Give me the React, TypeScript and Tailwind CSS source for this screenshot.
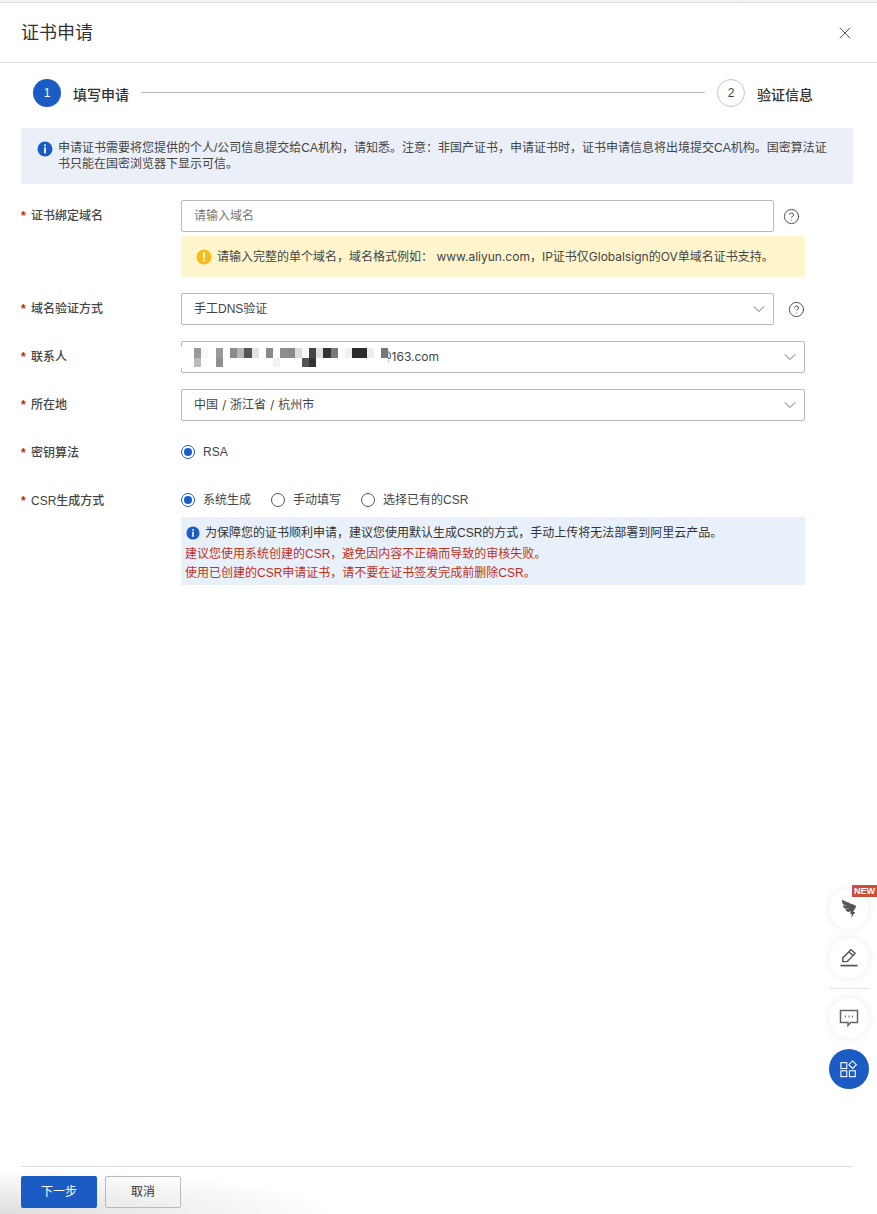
import { ChevronDown, CircleHelp, X } from "lucide-react";
import { AiOutlineDingding } from "react-icons/ai";

// redacted email mosaic, 7px cols starting at x=194
const mosaicTop = [
  "bg-[#999]", "bg-[#f8f8f8]", "", "bg-[#999]", "", "bg-[#8a8a8a]", "bg-[#b5b5b5]", "bg-[#555]", "bg-[#e2e2e2]", "",
  "bg-[#8a8a8a]", "", "bg-[#8f8f8f]", "bg-[#8a8a8a]", "bg-[#ddd]", "bg-[#f8f8f8]", "bg-[#444]", "bg-[#e0e0e0]", "bg-[#333]", "bg-[#777]",
  "bg-white", "bg-[#f0f0f0]", "bg-[#2b2b2b]", "bg-[#2b2b2b]", "bg-[#eee]", "bg-white", "bg-[#777]",
];
const mosaicBottom = [
  "bg-[#bbb]", "", "", "bg-[#8f8f8f]", "", "", "", "", "", "",
  "", "bg-[#f2f2f2]", "", "", "", "bg-[#555]", "bg-[#333]", "", "", "",
  "", "", "", "", "", "bg-white", "bg-white",
];

function InfoIcon({ className }: { className: string }) {
  return (
    <svg viewBox="0 0 16 16" className={className}>
      <circle cx="8" cy="8" r="7.5" fill="#1b5cc4" />
      <rect x="7.1" y="3.4" width="1.8" height="1.8" fill="#fff" />
      <rect x="7.1" y="6.4" width="1.8" height="6" fill="#fff" />
    </svg>
  );
}

function Label({ children }: { children: string }) {
  return (
    <div className="w-[160px] shrink-0 flex text-xs leading-[inherit] font-medium text-[#444]">
      <span className="w-[10px] text-[#c7260e] font-bold">*</span>
      {children}
    </div>
  );
}

function Radio({ label, checked }: { label: string; checked?: boolean }) {
  return (
    <div className="flex items-center gap-2 text-xs text-[#444]">
      <span className={`w-[14px] h-[14px] rounded-full border flex items-center justify-center ${checked ? "border-[#1b5cc4]" : "border-[#555]"}`}>
        {checked && <span className="w-2 h-2 rounded-full bg-[#1b5cc4]" />}
      </span>
      {label}
    </div>
  );
}

function Help() {
  return <CircleHelp size={17} strokeWidth={1.2} className="text-[#333]" />;
}

function Select({ children }: { children: React.ReactNode }) {
  return (
    <div className="flex-1 h-8 border border-[#b8bac2] rounded-[2px] px-3 flex items-center justify-between text-xs text-[#444]">
      <span>{children}</span>
      <ChevronDown size={20} strokeWidth={1} className="text-[#555] -mr-[8px]" />
    </div>
  );
}

export default function App() {
  return (
    <div className="relative h-screen overflow-hidden bg-white flex flex-col font-['Liberation_Sans','Noto_Sans_CJK_SC',sans-serif]">
      <div className="absolute left-0 bottom-0 w-[340px] h-[46px] bg-[radial-gradient(ellipse_at_bottom_left,#dedede,transparent_70%)]" />

      <div className="h-[3px] bg-[#f4f4f4] border-b border-[#dcdcdc] flex justify-end pr-[138px]">
        <div className="w-px bg-[#ddd]" />
      </div>

      <header className="h-[60px] shrink-0 border-b border-[#e3e3e3] pl-[21px] pr-[22px] flex items-center justify-between">
        <h1 className="text-lg text-[#333]">证书申请</h1>
        <X size={20} strokeWidth={1} className="text-[#333]" />
      </header>

      <main className="flex-1 pl-[21px] pr-6 pt-4">
        <div className="flex items-start pl-3 pr-10">
          <span className="w-7 h-7 rounded-full bg-[#1b5cc4] text-white text-xs flex items-center justify-center">1</span>
          <span className="ml-3 mt-[7px] text-sm leading-[18px] font-medium text-[#333]">填写申请</span>
          <div className="flex-1 h-px bg-[#b8bac2] mx-3 mt-[13px]" />
          <span className="w-7 h-7 rounded-full border border-[#c4c6cf] text-[#444] text-xs flex items-center justify-center">2</span>
          <span className="ml-3 mt-[7px] text-sm leading-[18px] font-medium text-[#333]">验证信息</span>
        </div>

        <div className="mt-[21px] h-14 bg-[#ebeff7] rounded-[2px] pl-4 pr-6 py-3 flex gap-[5px] text-xs leading-4 text-[#444]">
          <InfoIcon className="w-4 h-4 shrink-0 mt-[1px]" />
          <p>申请证书需要将您提供的个人/公司信息提交给CA机构，请知悉。注意：非国产证书，申请证书时，证书申请信息将出境提交CA机构。国密算法证书只能在国密浏览器下显示可信。</p>
        </div>

        <div className="mt-4 w-[784px] flex flex-col gap-4">
          <div className="flex leading-8">
            <Label>证书绑定域名</Label>
            <div className="flex-1">
              <div className="flex items-center">
                <div className="w-[593px] h-8 border border-[#b8bac2] rounded-[2px] px-3 flex items-center text-xs text-[#777]">请输入域名</div>
                <span className="ml-[9px]"><Help /></span>
              </div>
              <div className="mt-1 h-[41px] bg-[#fff5cc] rounded-[2px] pl-[15px] flex items-center gap-[5px] text-xs text-[#444] font-['Inter','Noto_Sans_CJK_SC',sans-serif]">
                <svg viewBox="0 0 16 16" className="w-4 h-4 shrink-0">
                  <circle cx="8" cy="8" r="7.5" fill="#f7bc1c" />
                  <rect x="7.1" y="3.4" width="1.8" height="6" fill="#fff" />
                  <rect x="7.1" y="10.6" width="1.8" height="1.8" fill="#fff" />
                </svg>
                <span>请输入完整的单个域名，域名格式例如： www.aliyun.com，IP证书仅Globalsign的OV单域名证书支持。</span>
              </div>
            </div>
          </div>

          <div className="flex leading-8">
            <Label>域名验证方式</Label>
            <div className="flex-1 flex items-center">
              <Select>手工DNS验证</Select>
              <span className="ml-[14px]"><Help /></span>
            </div>
          </div>

          <div className="flex leading-8">
            <Label>联系人</Label>
            <div className="relative flex-1 flex">
              <Select><span className="ml-[186px] font-['Inter','Noto_Sans_CJK_SC',sans-serif]">@163.com</span></Select>
              <div className="absolute left-0 top-[6px] bottom-[5px] w-[2px] bg-white" />
              <div className="absolute left-[13px] top-[7px] flex flex-col">
                <div className="flex">
                  {mosaicTop.map((c, i) => (
                    <span key={i} className={`w-[7.2px] h-[9.5px] ${c}`} />
                  ))}
                </div>
                <div className="flex">
                  {mosaicBottom.map((c, i) => (
                    <span key={i} className={`w-[7.2px] h-[9.5px] ${c}`} />
                  ))}
                </div>
              </div>
            </div>
          </div>

          <div className="flex leading-8">
            <Label>所在地</Label>
            <div className="flex-1 flex">
              <Select><span className="font-['Inter','Noto_Sans_CJK_SC',sans-serif] [word-spacing:0.5px]">中国 / 浙江省 / 杭州市</span></Select>
            </div>
          </div>

          <div className="flex leading-[30px] h-[30px] mb-[2px]">
            <div className="pt-px"><Label>密钥算法</Label></div>
            <Radio label="RSA" checked />
          </div>

          <div className="flex">
            <div className="pt-px leading-[30px]"><Label>CSR生成方式</Label></div>
            <div className="flex-1">
              <div className="h-[30px] flex items-center gap-5">
                <Radio label="系统生成" checked />
                <Radio label="手动填写" />
                <Radio label="选择已有的CSR" />
              </div>
              <div className="mt-[2px] h-[68px] bg-[#e8f1fa] px-1 pt-[6px] text-xs">
                <div className="flex items-center gap-[5px] h-5 text-[#333] pl-[1px] mb-[2px]">
                  <InfoIcon className="w-[14px] h-[14px] shrink-0" />
                  为保障您的证书顺利申请，建议您使用默认生成CSR的方式，手动上传将无法部署到阿里云产品。
                </div>
                <p className="leading-[19px] text-[#c2301a]">建议您使用系统创建的CSR，避免因内容不正确而导致的审核失败。</p>
                <p className="leading-[19px] text-[#c2301a]">使用已创建的CSR申请证书，请不要在证书签发完成前删除CSR。</p>
              </div>
            </div>
          </div>
        </div>
      </main>

      <footer className="relative ml-[21px] mr-6 h-[48px] shrink-0 border-t border-[#dcdcdc] pt-[9px] flex gap-2 text-xs">
        <button className="w-[76px] h-8 rounded-[2px] bg-[#1b5cc4] text-white">下一步</button>
        <button className="w-[76px] h-8 rounded-[2px] border border-[#b8bac2] text-[#333]">取消</button>
      </footer>

      <div className="absolute left-[829px] top-[889px] w-10 flex flex-col items-center">
        <div className="relative w-10 h-10 rounded-full bg-white shadow-[0_0_8px_rgba(0,0,0,0.08)] flex items-center justify-center">
          <AiOutlineDingding size={22} className="text-[#555]" />
          <span className="absolute left-[23px] -top-[4px] h-3 w-[25px] bg-[#c9503a] text-white text-[9px] leading-3 font-bold text-center">NEW</span>
        </div>
        <div className="mt-[9px] w-10 h-10 rounded-full bg-white shadow-[0_0_8px_rgba(0,0,0,0.08)] flex items-center justify-center">
          <svg viewBox="0 0 20 20" className="w-5 h-5" fill="none" stroke="#555" strokeWidth="1.4">
            <path d="M12 1.8l4.2 3.6-8 8.2H3.8v-3.7z" />
            <path d="M10 4l4.2 3.6" />
            <path d="M1.5 17.6h17" strokeWidth="1.7" />
          </svg>
        </div>
        <div className="mt-[10px] w-10 h-px bg-[#e2e2e2]" />
        <div className="mt-[9px] w-10 h-10 rounded-full bg-white shadow-[0_0_8px_rgba(0,0,0,0.08)] flex items-center justify-center">
          <svg viewBox="0 0 20 20" className="w-5 h-5" fill="none" stroke="#666" strokeWidth="1.5">
            <path d="M1.5 2.5h17v12h-7l-2.5 3v-3h-7.5z" />
            <path d="M6 8.5h1M9.5 8.5h1M13 8.5h1" strokeWidth="1.8" />
          </svg>
        </div>
        <div className="mt-[11px] w-10 h-10 rounded-full bg-[#1b5cc4] flex items-center justify-center">
          <svg viewBox="0 0 20 20" className="w-[18px] h-[18px]" fill="none" stroke="#fff" strokeWidth="1.2">
            <rect x="1" y="3" width="6.5" height="6.5" />
            <rect x="1" y="12" width="6.5" height="6.5" />
            <rect x="10.5" y="12" width="6.5" height="6.5" />
            <path d="M14 1l4.2 4.2-4.2 4.2-4.2-4.2z" />
          </svg>
        </div>
      </div>
    </div>
  );
}
